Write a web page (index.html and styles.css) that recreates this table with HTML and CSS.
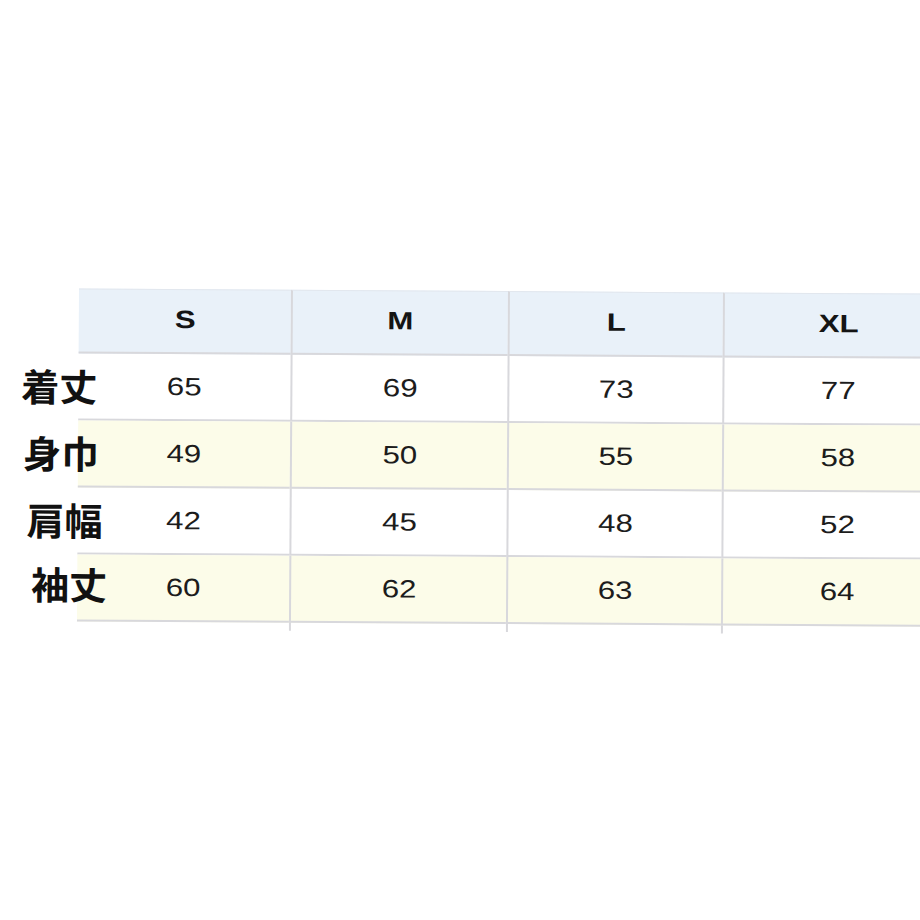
FILE: index.html
```html
<!DOCTYPE html>
<html lang="ja">
<head>
<meta charset="utf-8">
<title>サイズ表</title>
<link rel="stylesheet" href="styles.css">
</head>
<body>
<main class="page">
  <div class="size-table">
    <div class="row head">
      <div class="label"></div>
      <div class="cell"><span>S</span></div>
      <div class="cell"><span>M</span></div>
      <div class="cell"><span>L</span></div>
      <div class="cell"><span>XL</span></div>
    </div>
    <div class="row">
      <div class="label">着丈</div>
      <div class="cell"><span>65</span></div>
      <div class="cell"><span>69</span></div>
      <div class="cell"><span>73</span></div>
      <div class="cell"><span>77</span></div>
    </div>
    <div class="row alt row-2">
      <div class="label">身巾</div>
      <div class="cell"><span>49</span></div>
      <div class="cell"><span>50</span></div>
      <div class="cell"><span>55</span></div>
      <div class="cell"><span>58</span></div>
    </div>
    <div class="row row-3">
      <div class="label">肩幅</div>
      <div class="cell"><span>42</span></div>
      <div class="cell"><span>45</span></div>
      <div class="cell"><span>48</span></div>
      <div class="cell"><span>52</span></div>
    </div>
    <div class="row alt row-4">
      <div class="label">袖丈</div>
      <div class="cell"><span>60</span></div>
      <div class="cell"><span>62</span></div>
      <div class="cell"><span>63</span></div>
      <div class="cell"><span>64</span></div>
    </div>
    <div class="row tail">
      <div class="label"></div>
      <div class="cell"></div>
      <div class="cell"></div>
      <div class="cell"></div>
      <div class="cell"></div>
    </div>
  </div>
</main>
</body>
</html>
```

FILE: styles.css
```css
html, body {
  margin: 0;
  padding: 0;
  background: #ffffff;
}

.page {
  width: 920px;
  height: 920px;
  overflow: hidden;
  box-sizing: border-box;
  padding-top: 288px;
}

.size-table {
  width: 953px;
  transform: rotate(0.35deg);
  transform-origin: 0 0;
}

.row {
  display: grid;
  grid-template-columns: 79px 212px 217px 215px 230px;
  height: 67px;
}

.head {
  height: 65px;
}

.cell {
  box-sizing: border-box;
  display: flex;
  align-items: center;
  justify-content: center;
  border-bottom: 2px solid #d8d8dc;
  font-family: "Liberation Sans", Arial, sans-serif;
  font-size: 25px;
  color: #1c1c1c;
}

.cell + .cell {
  border-left: 2px solid #d8d8dc;
}

.cell span {
  display: inline-block;
  transform: scaleX(1.25);
}

.head .cell {
  background: #e9f1f9;
  border-top: 1px solid #e2e7ee;
  font-weight: bold;
  color: #141414;
  padding-bottom: 4px;
}

.alt .cell {
  background: #fcfce9;
}

.label {
  position: relative;
  z-index: 1;
  display: flex;
  align-items: center;
  white-space: nowrap;
  box-sizing: border-box;
  padding-left: 22px;
  padding-bottom: 3px;
  font-family: "Noto Sans CJK JP", sans-serif;
  font-weight: bold;
  font-size: 38px;
  line-height: 1;
  color: #111111;
}

.row-2 .label {
  padding-left: 24px;
}

.row-3 .label {
  padding-left: 28px;
}

.row-4 .label {
  padding-left: 33px;
  padding-bottom: 10px;
}

.tail {
  height: 8px;
}

.tail .cell {
  border-bottom: none;
}
```
